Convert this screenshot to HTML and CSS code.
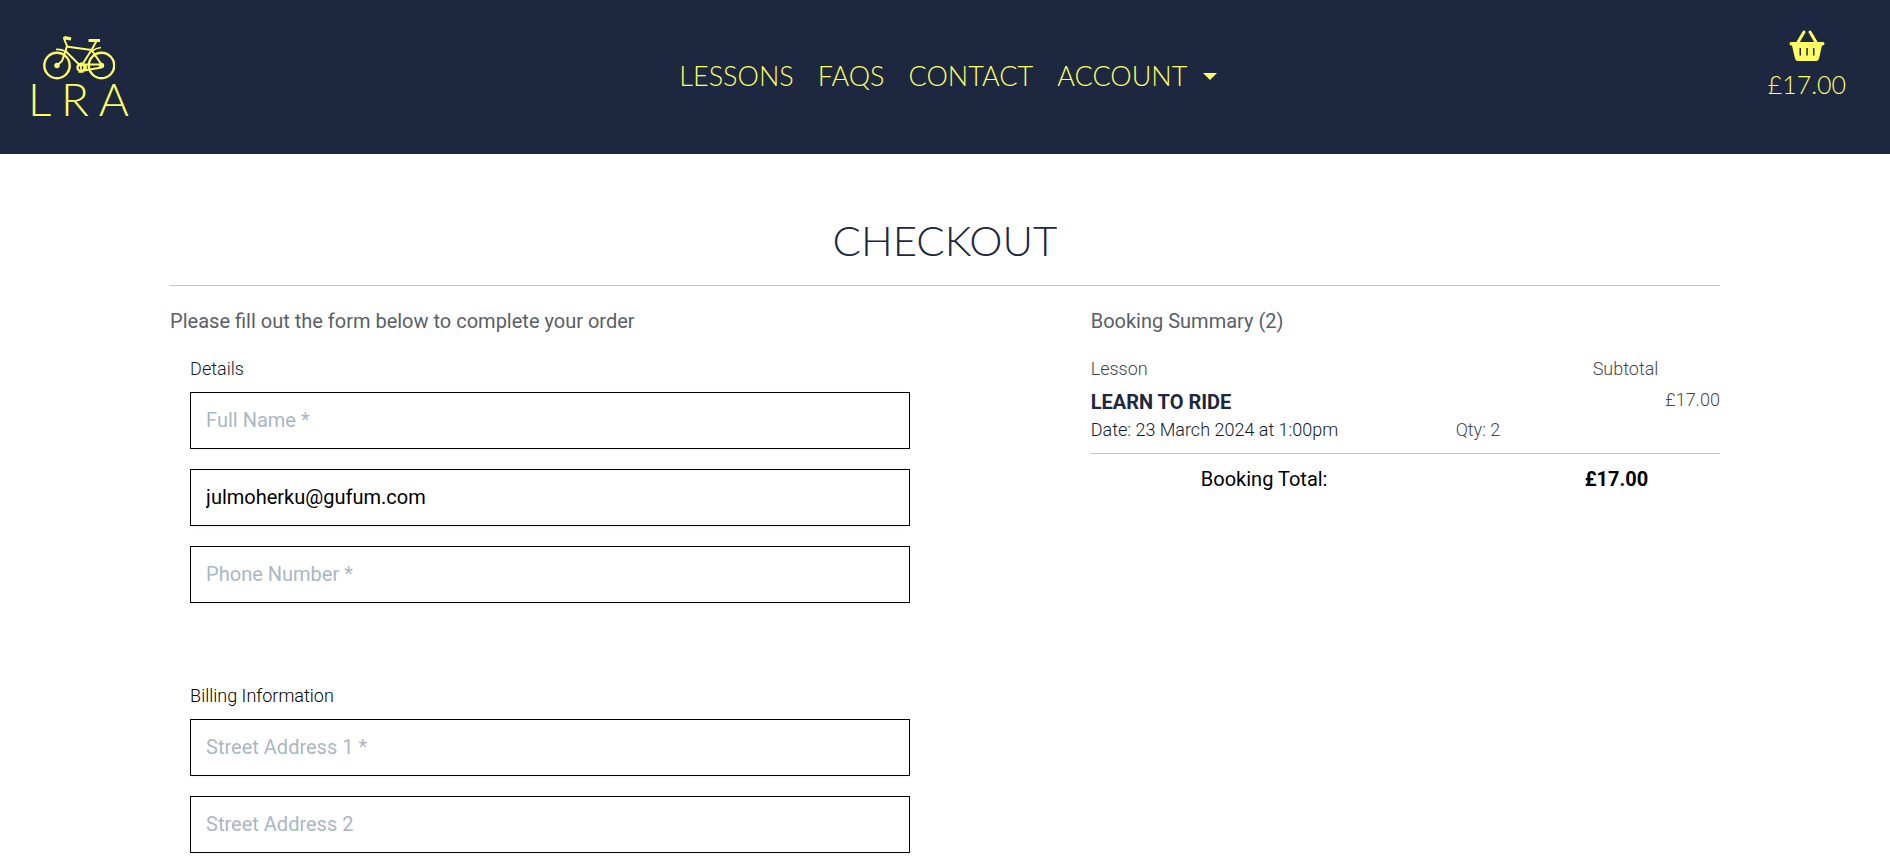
FILE: index.html
```html
<!DOCTYPE html>
<html lang="en">
<head>
<meta charset="utf-8">
<meta name="viewport" content="width=device-width, initial-scale=1">
<title>Checkout</title>
<link rel="stylesheet" href="styles.css">
</head>
<body>
<header class="site-header">
  <a class="logo" href="#" aria-label="LRA home">
    <svg class="logo-bike" viewBox="0 0 72 44" fill="none" stroke="currentColor" stroke-width="2.300" aria-hidden="true">
      <circle cx="14" cy="29.500" r="12.700" stroke-width="2.400"/>
      <circle cx="58.500" cy="29.500" r="12.700" stroke-width="2.400"/>
      <circle cx="14" cy="29.500" r="2.700" fill="currentColor" stroke="none"/>
      <circle cx="58.500" cy="29.500" r="2.700" fill="currentColor" stroke="none"/>
      <path d="M28 2.500 22.500 1.200Q20.500 1 21.200 3L24 10 22.500 15 19 25 14 29.500" stroke-width="2"/>
      <path d="M22 2l6 1" stroke-width="3"/>
      <path d="M23 10.500 48.500 14M22.500 15 38 30.500 48.500 14 53.500 5M48.500 14 58.500 28.500 38 28.500M38 35l20.500-3.500" stroke-width="2"/>
      <path d="M45.500 4.500h11.500" stroke-width="3"/>
      <path d="M13 13.500q5-.5 9.500 2M49 15q4-3 9-3.500" stroke-width="1.700"/>
      <circle cx="38" cy="31.500" r="3.600"/>
      <path d="M38 26.500v10M35.500 36h5M43 29v5" stroke-width="1.700"/>
    </svg>
    <span class="logo-letters"><span>L</span><span>R</span><span>A</span></span>
  </a>
  <nav class="main-nav">
    <a href="#">LESSONS</a>
    <a href="#">FAQS</a>
    <a href="#">CONTACT</a>
    <a class="has-menu" href="#">ACCOUNT</a>
  </nav>
  <a class="basket" href="#">
    <svg class="basket-icon" viewBox="0 0 36 32" aria-hidden="true">
      <path d="M15 2 8.500 13M21 2l6.500 11" fill="none" stroke="currentColor" stroke-width="3" stroke-linecap="round"/>
      <path fill="currentColor" fill-rule="evenodd" d="M2 12h32q1.500 0 1.500 1.500T34 15.500h-1L30 28.500Q29.500 31 27 31H9Q6.500 31 6 28.500L3 15.500H2Q.5 15.500.5 13.700T2 12zM10.500 18v7.500h1.500V18zM17.300 18v7.500h1.500V18zM24 18v7.500h1.500V18z"/>
    </svg>
    <span>£17.00</span>
  </a>
</header>
<main class="page">
  <h1 class="page-title">CHECKOUT</h1>
  <div class="columns">
    <section class="order">
      <h2 class="lead">Please fill out the form below to complete your order</h2>
      <form class="order-form">
        <fieldset class="group">
          <legend class="label navy">Details</legend>
          <input class="field" type="text" placeholder="Full Name *" aria-label="Full Name">
          <input class="field" type="email" value="julmoherku@gufum.com" aria-label="Email Address">
          <input class="field" type="tel" placeholder="Phone Number *" aria-label="Phone Number">
        </fieldset>
        <fieldset class="group">
          <legend class="label">Billing Information</legend>
          <input class="field" type="text" placeholder="Street Address 1 *" aria-label="Street Address 1">
          <input class="field" type="text" placeholder="Street Address 2" aria-label="Street Address 2">
        </fieldset>
      </form>
    </section>
    <section class="summary">
      <h2 class="lead">Booking Summary (2)</h2>
      <table class="bookings">
        <colgroup><col class="col-lesson"><col class="col-qty"><col></colgroup>
        <thead>
          <tr><th scope="col">Lesson</th><td></td><th class="center" scope="col">Subtotal</th></tr>
        </thead>
        <tbody>
          <tr>
            <td class="lesson"><strong>LEARN TO RIDE</strong><span>Date: 23 March 2024 at 1:00pm</span></td>
            <td class="qty">Qty: 2</td>
            <td class="price">£17.00</td>
          </tr>
        </tbody>
        <tfoot>
          <tr><th scope="row">Booking Total:</th><td></td><td class="total">£17.00</td></tr>
        </tfoot>
      </table>
    </section>
  </div>
</main>
</body>
</html>
```
FILE: styles.css
```css
* { box-sizing: border-box; }
body {
  margin: 0;
  background: #fff;
  color: #000;
  font: 300 18px/27px Roboto, "Liberation Sans", sans-serif;
  overflow-x: hidden;
}
a { color: inherit; text-decoration: none; }

.site-header {
  display: flex;
  justify-content: space-between;
  align-items: flex-start;
  padding: 28px 44px 36px 28px;
  background: #1d2840;
  color: #ffff64;
  font: 300 25px/30px Lato, "Open Sans", sans-serif;
}
.logo { display: block; width: 101px; padding-top: 8px; }
.logo-bike { display: block; width: 72px; height: 44px; margin-left: 15px; }
.logo-letters {
  display: flex;
  justify-content: space-between;
  font-size: 46px;
  line-height: 38px;
}
.main-nav { display: flex; gap: 24px; padding-top: 32px; font-size: 27px; line-height: 32px; }
.has-menu { display: flex; align-items: center; gap: 16px; }
.has-menu::after {
  content: "";
  border: 7px solid transparent;
  border-top-color: currentColor;
  border-bottom: 0;
}
.basket { display: flex; flex-direction: column; align-items: center; gap: 6px; padding-top: 1px; }
.basket-icon { width: 36px; height: 34px; }

.page { margin: 0 9%; padding: 60px 0 14px; }
.page-title {
  margin: 0;
  padding-bottom: 19px;
  border-bottom: 1px solid #c4c5cb;
  color: #1d2840;
  font: 300 42px/52px Lato, "Open Sans", sans-serif;
  text-align: center;
}
.columns { display: flex; justify-content: space-between; padding-top: 20px; }
.order { width: 49%; }
.summary { width: 40.6%; }
.lead { margin: 0 0 19px; color: #5a5f66; font-weight: 400; font-size: 20px; line-height: 30px; }

.order-form { padding: 0 20px; }
.group { margin: 0 0 79px; padding: 0; border: 0; }
.group:last-child { margin: 0; }
.label { padding: 0; margin-bottom: 10px; }
.navy { color: #101a30; }
.field {
  display: block;
  width: 100%;
  padding: 13px 15px;
  border: 1px solid #000;
  border-radius: 0;
  background: #fff;
  box-shadow: 0 1px 3px rgba(0, 0, 0, 0.05);
  color: #000;
  font: 400 20px/29px Roboto, "Liberation Sans", sans-serif;
}
.field + .field { margin-top: 20px; }
.field::placeholder { color: #aab7c4; opacity: 1; }

.bookings { width: 100%; table-layout: fixed; border-collapse: collapse; color: #43474d; }
.bookings th, .bookings td { padding: 0; font-weight: inherit; text-align: left; vertical-align: top; }
.col-lesson { width: 58%; }
.col-qty { width: 12%; }
.bookings .center { text-align: center; }
.bookings thead th { padding-bottom: 4px; }
.bookings tbody td { padding-bottom: 10px; border-bottom: 1px solid #c4c5cb; }
.lesson { color: #101a30; }
.lesson strong { display: block; padding-top: 1px; color: #1d2840; font-size: 20px; font-weight: 700; line-height: 30px; }
.lesson span { display: block; line-height: 26px; }
.bookings .qty { vertical-align: bottom; line-height: 26px; }
.bookings .price { text-align: right; }
.bookings tfoot th, .bookings tfoot td {
  padding: 10px 18px 0 0;
  color: #000;
  font-size: 20px;
  font-weight: 400;
  line-height: 30px;
  text-align: center;
}
.bookings tfoot .total { font-weight: 700; }
```
